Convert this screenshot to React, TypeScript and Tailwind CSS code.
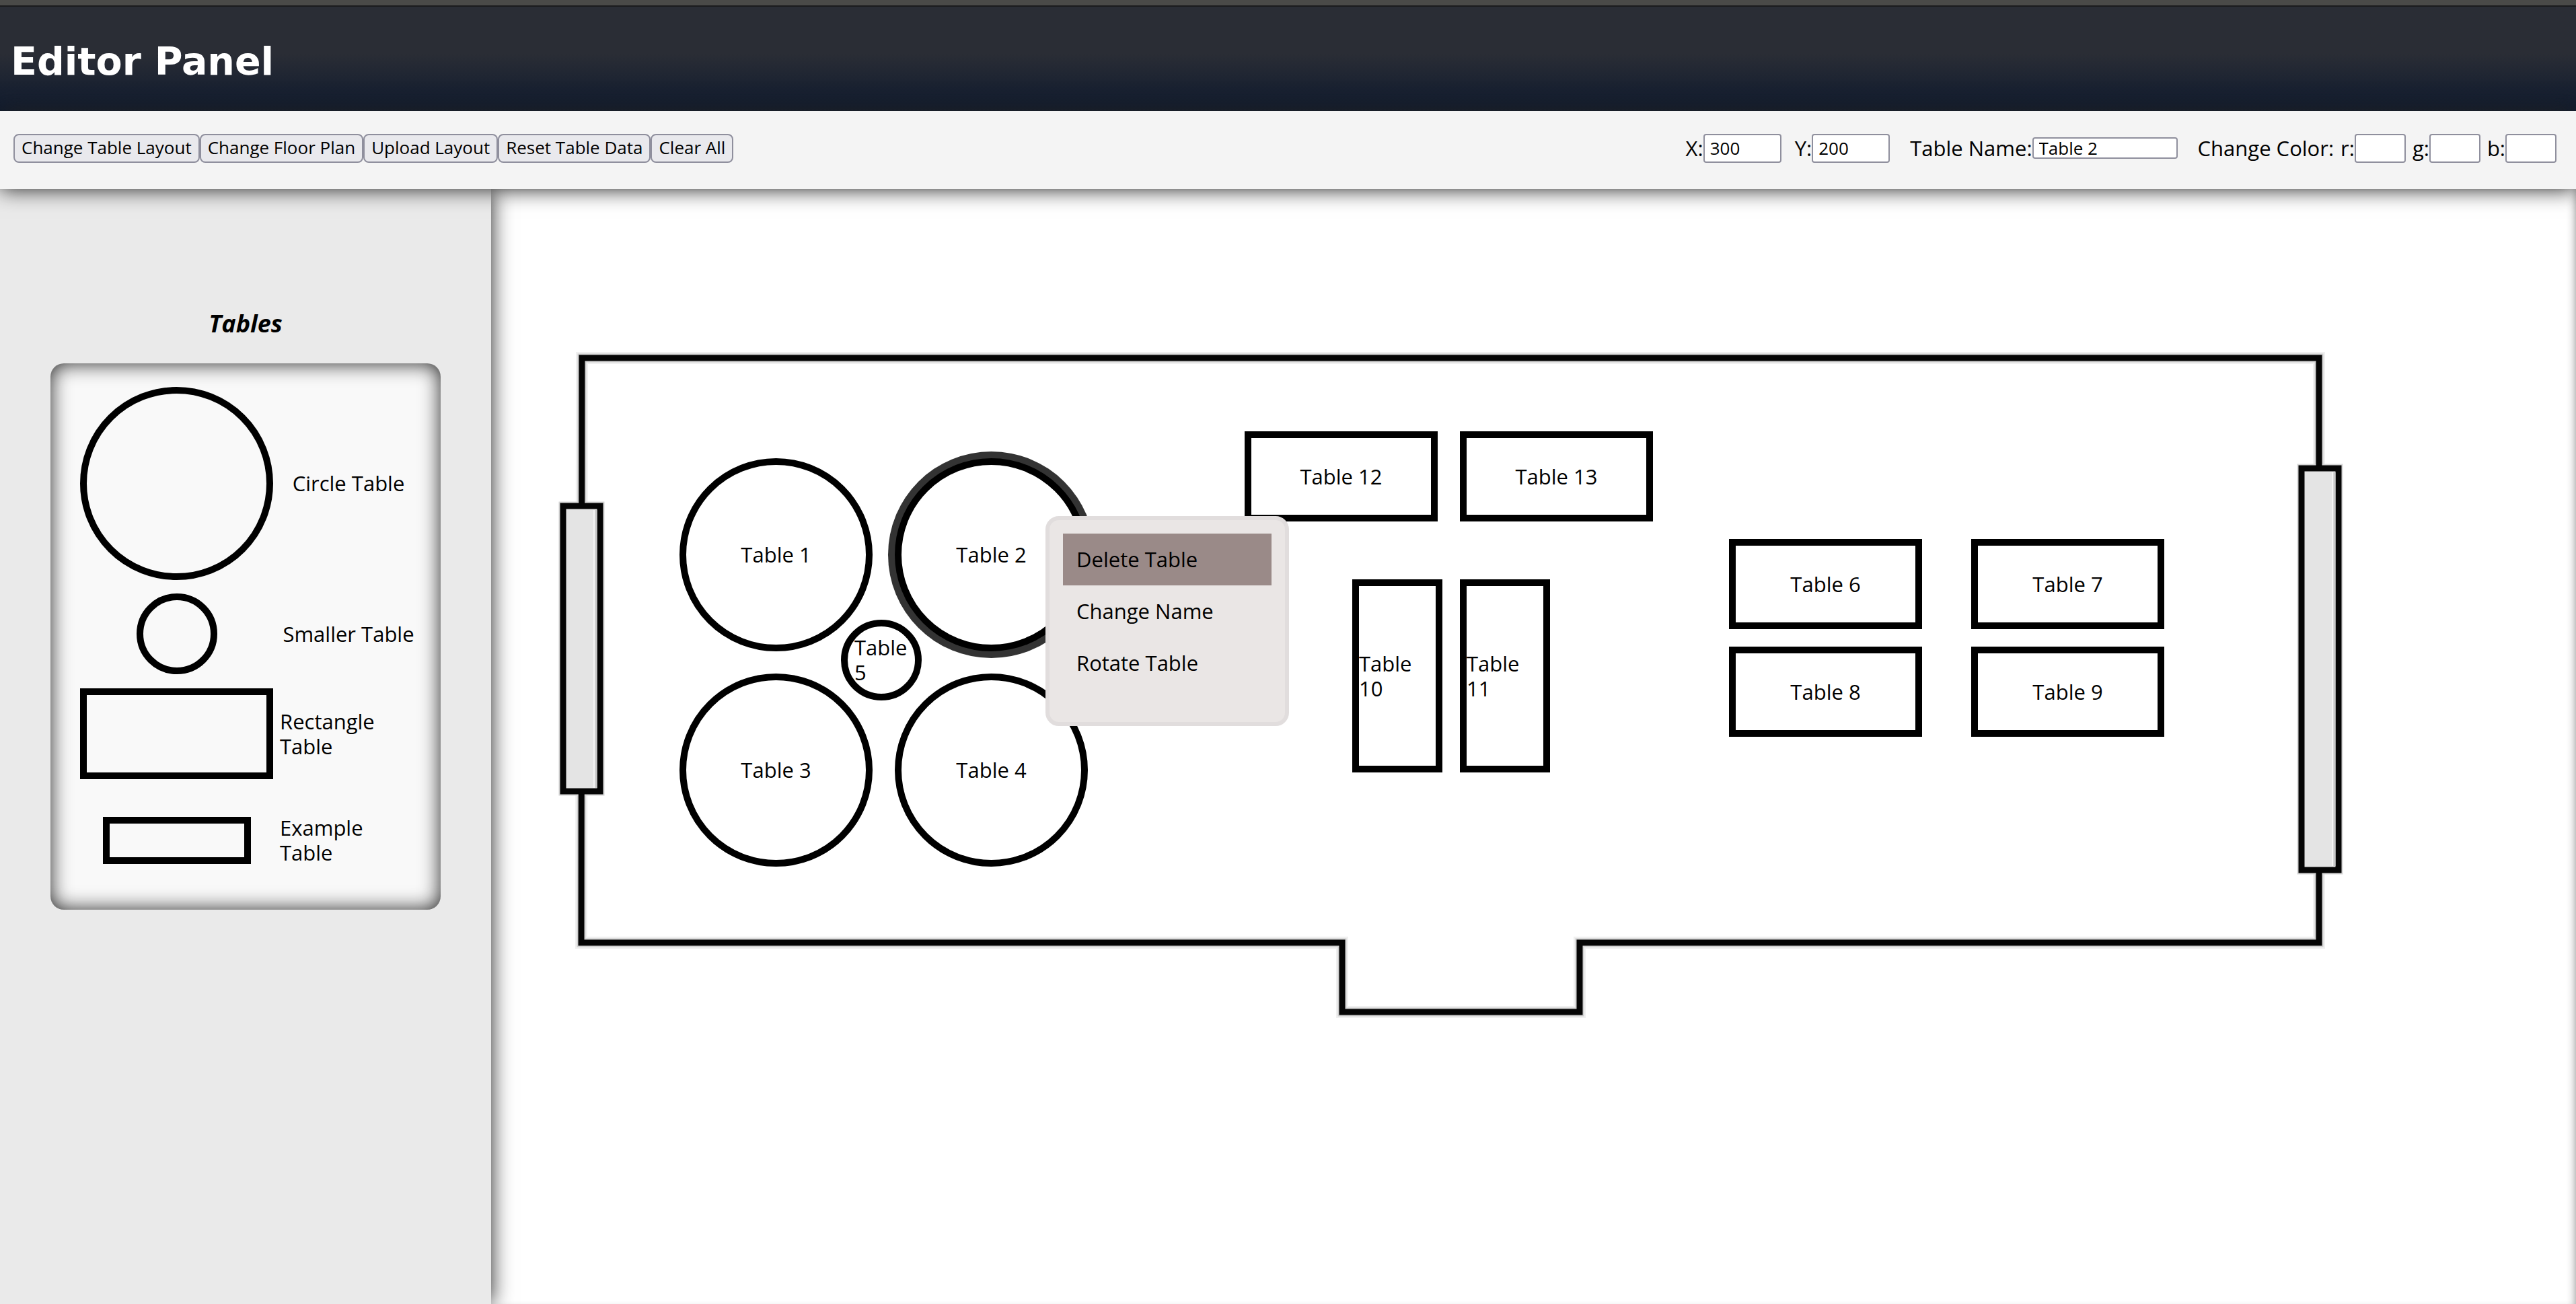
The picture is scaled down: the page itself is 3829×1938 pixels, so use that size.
import { useState, type ReactNode } from "react";

type Shape = "circle" | "small" | "wide" | "tall";

type FloorTable = {
  name: string;
  x: number;
  y: number;
  shape: Shape;
};

const ACTIONS = [
  "Change Table Layout",
  "Change Floor Plan",
  "Upload Layout",
  "Reset Table Data",
  "Clear All",
];

const MENU_ITEMS = ["Delete Table", "Change Name", "Rotate Table"];

const TABLES: FloorTable[] = [
  { name: "Table 1", x: 280, y: 400, shape: "circle" },
  { name: "Table 2", x: 600, y: 400, shape: "circle" },
  { name: "Table 3", x: 280, y: 720, shape: "circle" },
  { name: "Table 4", x: 600, y: 720, shape: "circle" },
  { name: "Table 5", x: 520, y: 640, shape: "small" },
  { name: "Table 6", x: 1840, y: 520, shape: "wide" },
  { name: "Table 7", x: 2200, y: 520, shape: "wide" },
  { name: "Table 8", x: 1840, y: 680, shape: "wide" },
  { name: "Table 9", x: 2200, y: 680, shape: "wide" },
  { name: "Table 10", x: 1280, y: 580, shape: "tall" },
  { name: "Table 11", x: 1440, y: 580, shape: "tall" },
  { name: "Table 12", x: 1120, y: 360, shape: "wide" },
  { name: "Table 13", x: 1440, y: 360, shape: "wide" },
];

const SHAPE_CLASS: Record<Shape, string> = {
  circle: "h-[287px] w-[287px] rounded-full",
  small: "h-[120px] w-[120px] rounded-full px-[10px]",
  wide: "h-[134px] w-[287px]",
  tall: "h-[287px] w-[134px]",
};

const FIELD =
  "rounded-[4px] border-2 border-[#8f8f9d] bg-white px-2 text-[26px] leading-none text-black";

function Field({
  id,
  label,
  value,
  size,
}: {
  id: string;
  label: string;
  value?: string;
  size: string;
}) {
  return (
    <div className="flex items-center">
      <label htmlFor={id}>{label}</label>
      <input id={id} type="text" defaultValue={value} className={`${FIELD} ${size}`} />
    </div>
  );
}

function PaletteRow({ shape, label }: { shape: ReactNode; label: string }) {
  return (
    <>
      <div className="flex items-center justify-center">{shape}</div>
      <div className="flex items-center justify-center">
        <span>{label}</span>
      </div>
    </>
  );
}

function FloorPlan() {
  const outline = "M135 251 H2717 V1120 H1618 V1223 H1265 V1120 H134 Z";
  return (
    <svg
      className="absolute left-0 top-0 h-[1300px] w-[2800px]"
      viewBox="0 0 2800 1300"
      fill="none"
      aria-hidden="true"
    >
      <path d={outline} stroke="#f0f0f0" strokeWidth="18" />
      <path d={outline} stroke="#cfcfcf" strokeWidth="13" />
      <rect x="107" y="471" width="55" height="424" stroke="#d6d6d6" strokeWidth="13" />
      <rect x="2691" y="415" width="55" height="597" stroke="#d6d6d6" strokeWidth="13" />
      <path d={outline} stroke="#050505" strokeWidth="9" />
      <rect x="107" y="471" width="55" height="424" fill="#e4e4e4" stroke="#050505" strokeWidth="9" />
      <path d="M156 477 V890" stroke="#c9c9c9" strokeWidth="3" />
      <path d="M153 477 V890" stroke="#f4f4f4" strokeWidth="2" />
      <rect x="2691" y="415" width="55" height="597" fill="#e4e4e4" stroke="#050505" strokeWidth="9" />
      <path d="M2740 421 V1006" stroke="#c9c9c9" strokeWidth="3" />
      <path d="M2737 421 V1006" stroke="#f4f4f4" strokeWidth="2" />
    </svg>
  );
}

export default function App() {
  const [selected, setSelected] = useState("Table 2");

  return (
    <div className="flex min-h-screen flex-col bg-white font-['Open_Sans','Noto_Sans',sans-serif] text-[31px] leading-[37px] text-black">
      <div className="h-[10px] border-b-2 border-[#1b1b1d] bg-[#4a4a48]" />
      <header className="flex h-[155px] items-center bg-linear-to-b from-[#2a2d35] from-45% to-[#0f1a2e] px-4 pt-2">
        <h1 className="font-['DejaVu_Sans',sans-serif] text-[57px] font-bold leading-none text-white">
          Editor Panel
        </h1>
      </header>

      <div className="relative z-20 flex h-[116px] items-center justify-between bg-[#f4f4f4] pb-1.5 pl-5 pr-[29px] shadow-[0_0_30px_#222]">
        <div className="flex">
          {ACTIONS.map((action) => (
            <button
              key={action}
              type="button"
              className="h-[43px] rounded-[8px] border-2 border-[#8f8f9d] bg-[#e9e9ed] px-[10px] pb-0.5 text-[26px] leading-none"
            >
              {action}
            </button>
          ))}
        </div>
        <div className="flex items-center gap-[30px]">
          <div className="flex items-center gap-5">
            <Field id="x" label="X:" value="300" size="h-[43px] w-[116px]" />
            <Field id="y" label="Y:" value="200" size="h-[43px] w-[116px]" />
          </div>
          <Field id="name" label="Table Name:" value="Table 2" size="h-8 w-[216px]" />
          <div className="flex items-center gap-[10px]">
            <span>Change Color:</span>
            <Field id="r" label="r:" size="h-[43px] w-[76px]" />
            <Field id="g" label="g:" size="h-[43px] w-[76px]" />
            <Field id="b" label="b:" size="h-[43px] w-[76px]" />
          </div>
        </div>
      </div>

      <div className="flex flex-1">
        <aside className="relative z-10 flex w-[730px] shrink-0 flex-col items-center bg-[#eaeaea] pt-[180px] shadow-[0_0_30px_#222]">
          <h2 className="text-[36px] font-bold italic leading-[40px]">Tables</h2>
          <section
            aria-label="Tables"
            className="mt-[39px] grid w-[580px] grid-cols-[287px_204px] grid-rows-[287px_120px_137px_140px] gap-x-[10px] gap-y-5 rounded-[20px] bg-[#f9f9f9] px-11 pb-[33px] pt-[35px] shadow-[inset_0_0_30px_#222]"
          >
            <PaletteRow
              label="Circle Table"
              shape={<div className="h-[287px] w-[287px] rounded-full border-10 border-black" />}
            />
            <PaletteRow
              label="Smaller Table"
              shape={<div className="h-[120px] w-[120px] rounded-full border-10 border-black" />}
            />
            <PaletteRow
              label="Rectangle Table"
              shape={<div className="h-[135px] w-[287px] border-10 border-black" />}
            />
            <PaletteRow
              label="Example Table"
              shape={<div className="h-[70px] w-[220px] border-10 border-black" />}
            />
          </section>
        </aside>

        <main className="relative flex-1 overflow-hidden shadow-[inset_-10px_0_14px_-10px_#888]">
          <FloorPlan />
          {TABLES.map((table) => (
            <div
              key={table.name}
              onClick={() => setSelected(table.name)}
              style={{ left: table.x, top: table.y }}
              className={`absolute flex items-center justify-center border-10 border-black bg-white ${SHAPE_CLASS[table.shape]} ${
                selected === table.name ? "shadow-[0_0_0_10px_#333]" : ""
              }`}
            >
              <span>{table.name}</span>
            </div>
          ))}

          <ul
            role="menu"
            className="absolute left-[824px] top-[486px] h-[312px] w-[362px] rounded-[20px] border-6 border-[#e1dddd] bg-[#eae6e5] p-5"
          >
            {MENU_ITEMS.map((item, i) => (
              <li key={item} role="none">
                <button
                  type="button"
                  role="menuitem"
                  className={`h-[77px] w-full px-5 text-left ${i === 0 ? "bg-[#9a8a88]" : ""}`}
                >
                  {item}
                </button>
              </li>
            ))}
          </ul>
        </main>
      </div>
    </div>
  );
}
